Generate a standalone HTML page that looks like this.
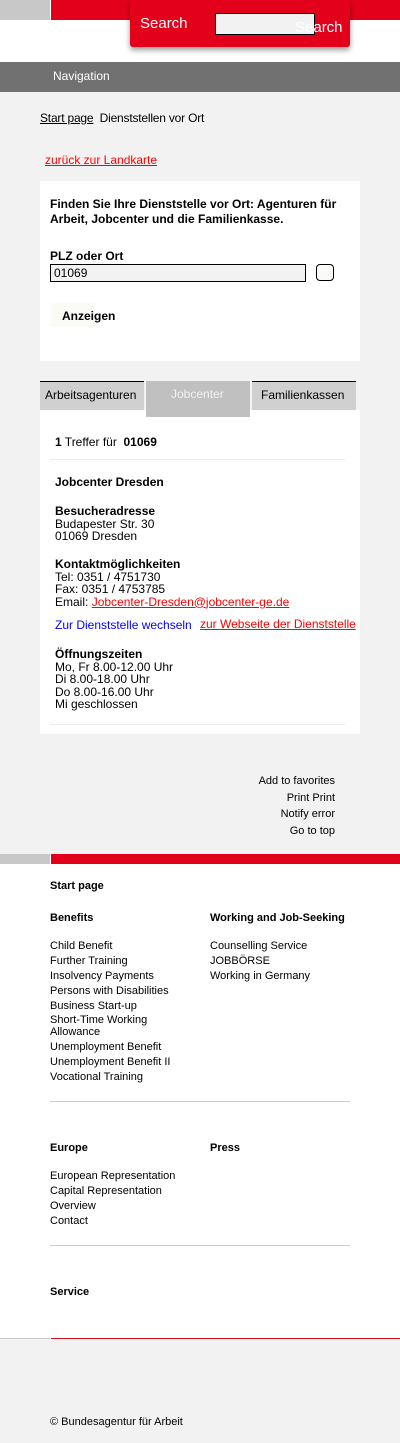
<!DOCTYPE html>
<html><head><meta charset="utf-8"><style>
*{margin:0;padding:0;box-sizing:border-box}
body{width:400px;height:1443px;position:relative;background:#fff;font-family:"Liberation Sans",Arial,sans-serif;color:#000;overflow:hidden}
.a{position:absolute;white-space:nowrap}
.b{font-weight:bold}
.s12{font-size:12px;line-height:12.5px}
.s11{font-size:11px}
</style></head><body>
<div class="a" style="left:0;top:0;width:50px;height:20px;background:#c8c8c8"></div>
<div class="a" style="left:51px;top:0;width:349px;height:20px;background:#e2001a"></div>
<div class="a" style="left:130px;top:0;width:220px;height:47px;background:#e2001a;border-radius:3px;box-shadow:0 3px 6px rgba(0,0,0,.4)"></div>
<div class="a" style="left:140px;top:15px;color:#fff;font-size:15px">Search</div>
<div class="a" style="left:215px;top:13px;width:100px;height:22px;background:#f2f2f2;border:1px solid #000"></div>
<div class="a" style="left:295px;top:19px;color:#fff;font-size:15px">Search</div>
<div class="a" style="left:0;top:62px;width:400px;height:30px;background:#717171"></div>
<div class="a" style="left:53px;top:69px;color:#fff;font-size:12px">Navigation</div>
<div class="a" style="left:0;top:92px;width:400px;height:762px;background:#f2f2f2"></div>
<div class="a s12" style="left:40px;top:112px;letter-spacing:-0.2px"><span style="text-decoration:underline">Start page</span>&nbsp; Dienststellen vor Ort</div>
<div class="a s12" style="left:45px;top:154px;color:#f00;text-decoration:underline">zurück zur Landkarte</div>
<div class="a" style="left:40px;top:181px;width:320px;height:180px;background:#fff"></div>
<div class="a b s12" style="left:50px;top:197px;line-height:14.5px">Finden Sie Ihre Dienststelle vor Ort: Agenturen für<br>Arbeit, Jobcenter und die Familienkasse.</div>
<div class="a b s12" style="left:50px;top:250px">PLZ oder Ort</div>
<div class="a" style="left:50px;top:264px;width:256px;height:18px;background:#f2f2f2;border:1px solid #000;font-size:12px;padding:1px 3px">01069</div>
<div class="a" style="left:316px;top:264px;width:18px;height:17px;background:#fbfbf5;border:1px solid #000;border-radius:4px"></div>
<div class="a" style="left:51px;top:303px;width:44px;height:24px;background:#fbfbf5"></div>
<div class="a b s12" style="left:62px;top:310px">Anzeigen</div>
<div class="a" style="left:40px;top:381px;width:104px;height:29px;background:#d0d0d0;border-top:1px solid #000"></div>
<div class="a s12" style="left:45px;top:389px">Arbeitsagenturen</div>
<div class="a" style="left:146px;top:381px;width:104px;height:36px;background:#c0c0c0"></div>
<div class="a s12" style="left:171px;top:388px;color:#f2f2f2">Jobcenter</div>
<div class="a" style="left:252px;top:381px;width:104px;height:29px;background:#d0d0d0;border-top:1px solid #000"></div>
<div class="a s12" style="left:261px;top:389px">Familienkassen</div>
<div class="a" style="left:40px;top:410px;width:106px;height:324px;background:#fff"></div>
<div class="a" style="left:250px;top:410px;width:110px;height:324px;background:#fff"></div>
<div class="a" style="left:146px;top:417px;width:104px;height:317px;background:#fff"></div>
<div class="a s12" style="left:55px;top:436px"><b>1</b> Treffer für&nbsp; <b>01069</b></div>
<div class="a" style="left:50px;top:459px;width:295px;height:1px;background:#eee"></div>
<div class="a b s12" style="left:55px;top:476px">Jobcenter Dresden</div>
<div class="a s12" style="left:55px;top:505px"><b>Besucheradresse</b><br>Budapester Str. 30<br>01069 Dresden</div>
<div class="a s12" style="left:55px;top:558px"><b>Kontaktmöglichkeiten</b><br>Tel: 0351 / 4751730<br>Fax: 0351 / 4753785<br>Email: <span style="color:#f00;text-decoration:underline">Jobcenter-Dresden@jobcenter-ge.de</span></div>
<div class="a s12" style="left:55px;top:619px;color:#00f">Zur Dienststelle wechseln</div>
<div class="a s12" style="left:200px;top:618px;color:#f00;text-decoration:underline">zur Webseite der Dienststelle</div>
<div class="a s12" style="left:55px;top:648px"><b>Öffnungszeiten</b><br>Mo, Fr 8.00-12.00 Uhr<br>Di 8.00-18.00 Uhr<br>Do 8.00-16.00 Uhr<br>Mi geschlossen</div>
<div class="a" style="left:50px;top:724px;width:295px;height:1px;background:#eee"></div>
<div class="a s11" style="right:65px;top:773px;text-align:right;line-height:16.5px">Add to favorites<br>Print Print<br>Notify error<br>Go to top</div>
<div class="a" style="left:0;top:854px;width:50px;height:10px;background:#c8c8c8"></div>
<div class="a" style="left:51px;top:854px;width:349px;height:10px;background:#e2001a"></div>
<div class="a b s11" style="left:50px;top:880px">Start page</div>
<div class="a b s11" style="left:50px;top:912px">Benefits</div>
<div class="a b s11" style="left:210px;top:912px">Working and Job-Seeking</div>
<div class="a s11" style="left:50px;top:939px;line-height:15px">Child Benefit<br>Further Training<br>Insolvency Payments<br>Persons with Disabilities<br>Business Start-up</div>
<div class="a s11" style="left:50px;top:1014px;line-height:12px">Short-Time Working<br>Allowance</div>
<div class="a s11" style="left:50px;top:1040px;line-height:15px">Unemployment Benefit<br>Unemployment Benefit II<br>Vocational Training</div>
<div class="a s11" style="left:210px;top:939px;line-height:15px">Counselling Service<br>JOBBÖRSE<br>Working in Germany</div>
<div class="a" style="left:50px;top:1101px;width:300px;height:1px;background:#ccc"></div>
<div class="a b s11" style="left:50px;top:1142px">Europe</div>
<div class="a b s11" style="left:210px;top:1142px">Press</div>
<div class="a s11" style="left:50px;top:1169px;line-height:15px">European Representation<br>Capital Representation<br>Overview<br>Contact</div>
<div class="a" style="left:50px;top:1245px;width:300px;height:1px;background:#ccc"></div>
<div class="a b s11" style="left:50px;top:1286px">Service</div>
<div class="a" style="left:0;top:1339px;width:400px;height:104px;background:#f2f2f2"></div>
<div class="a" style="left:0;top:1338px;width:50px;height:1px;background:#ccc"></div>
<div class="a" style="left:51px;top:1338px;width:349px;height:1px;background:#c8101e"></div>
<div class="a s11" style="left:50px;top:1416px">© Bundesagentur für Arbeit</div>
</body></html>
